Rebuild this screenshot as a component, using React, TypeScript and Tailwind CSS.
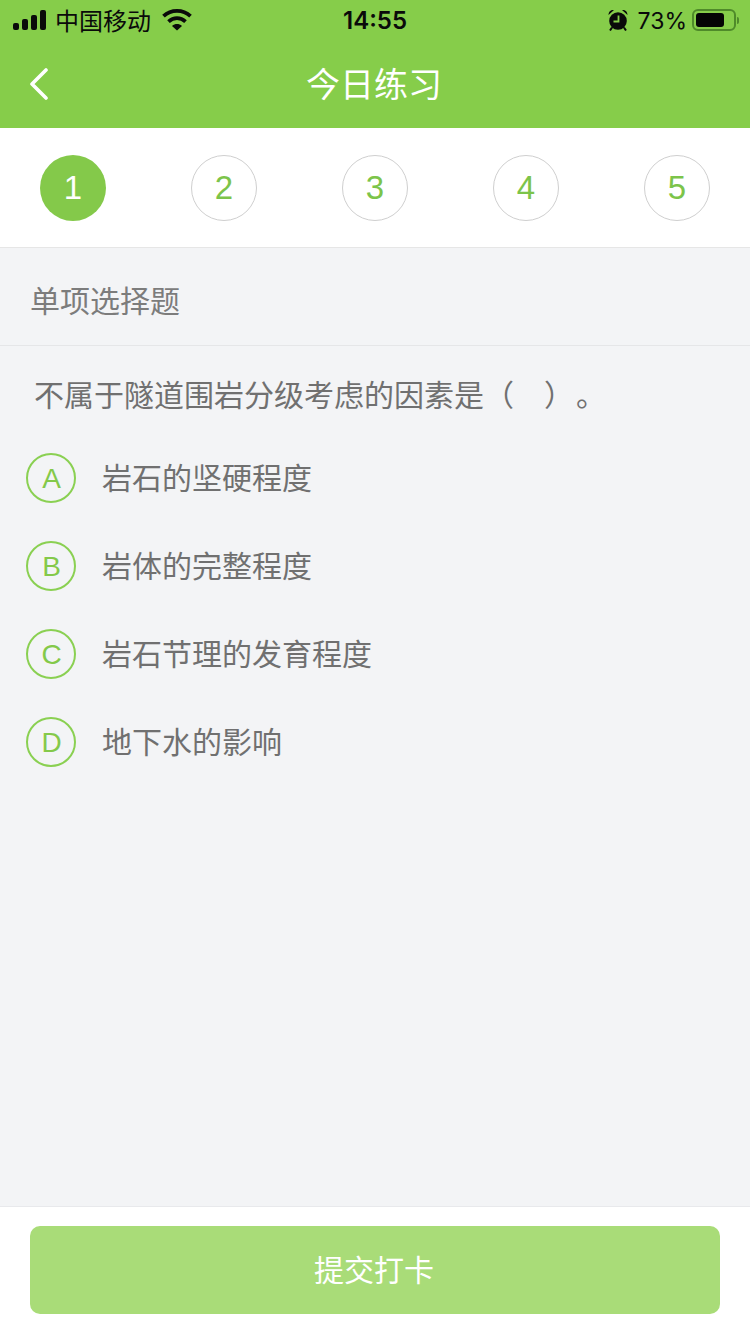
import React from "react";

const FONT = '"Noto Sans CJK SC", "Noto Sans", sans-serif';
const LATIN = '"Inter", "Noto Sans CJK SC", sans-serif';
const ARIAL = '"Liberation Sans", "Noto Sans CJK SC", sans-serif';

function Signal() {
  return (
    <svg width="34" height="20" viewBox="0 0 34 20" className="block">
      <rect x="0" y="13" width="6" height="7" rx="2" fill="#0a0a0a" />
      <rect x="9" y="9" width="6" height="11" rx="2" fill="#0a0a0a" />
      <rect x="18" y="5" width="6" height="15" rx="2" fill="#0a0a0a" />
      <rect x="27" y="0" width="6" height="20" rx="2" fill="#0a0a0a" />
    </svg>
  );
}

function Wifi() {
  return (
    <svg width="30" height="22" viewBox="0 0 30 22" className="block" fill="none" stroke="#0a0a0a" strokeWidth="3.8">
      <path d="M1.5 7.2 C9 0.2 21 0.2 28.5 7.2" />
      <path d="M6.5 12.6 C11.5 8 18.5 8 23.5 12.6" />
      <path d="M10 17 L15 21.5 L20 17 C17 14.4 13 14.4 10 17 Z" fill="#0a0a0a" stroke="none" />
    </svg>
  );
}

function Alarm() {
  return (
    <svg width="20" height="22" viewBox="0 0 20 22" className="block">
      <circle cx="10" cy="12" r="8.8" fill="#0a0a0a" />
      <path d="M10.5 6.5 V12.5 H5.5" stroke="#86cd4a" strokeWidth="1.8" fill="none" />
      <path d="M0.5 6 C0.5 2.5 3 0.6 6 1 Z M19.5 6 C19.5 2.5 17 0.6 14 1 Z" fill="#0a0a0a" />
      <path d="M4 18.5 L2 21.5 M16 18.5 L18 21.5" stroke="#0a0a0a" strokeWidth="2" />
    </svg>
  );
}

function Battery() {
  return (
    <div className="flex items-center gap-[1px]">
      <div className="w-[44px] h-[22px] rounded-[6px] border-2 border-[#4f8a2a] p-[2px]">
        <div className="h-full w-[28px] rounded-[3px] bg-[#050505]" />
      </div>
      <div className="w-[2px] h-[7px] rounded-r-full bg-[#4f8a2a]" />
    </div>
  );
}

function Step({ n, active }: { n: number; active?: boolean }) {
  return (
    <div
      className={
        active
          ? "w-[66px] h-[66px] rounded-full bg-[#84c94a] text-white flex items-center justify-center text-[33px]"
          : "w-[66px] h-[66px] rounded-full border border-[#cfcfcf] text-[#7cc44a] flex items-center justify-center text-[33px]"
      }
      style={{ fontFamily: ARIAL }}
    >
      {n}
    </div>
  );
}

function Option({ letter, text }: { letter: string; text: string }) {
  return (
    <div className="h-[88px] flex items-center pl-[26px]">
      <div
        className="w-[50px] h-[50px] rounded-full border-2 border-[#8ad052] text-[#84c94a] flex items-center justify-center pl-[1px] pt-[2px] text-[28px] shrink-0"
        style={{ fontFamily: ARIAL }}
      >
        {letter}
      </div>
      <div className="ml-[26px] pb-[4px] text-[30px] leading-[40px] text-[#707070]">{text}</div>
    </div>
  );
}

export default function App() {
  return (
    <div className="w-[750px] h-[1334px] flex flex-col bg-[#f3f4f6] overflow-hidden" style={{ fontFamily: FONT }}>
      <header className="h-[128px] bg-[#86cd4a] shrink-0 flex flex-col">
        <div className="h-[40px] flex items-center justify-between pl-[13px] pr-[11px] relative">
          <div className="flex items-center">
            <Signal />
            <span className="ml-[8px] text-[24px] leading-none text-[#0a0a0a]">中国移动</span>
            <span className="ml-[11px]"><Wifi /></span>
          </div>
          <div className="absolute left-0 right-0 top-[5px] text-center text-[24px] leading-[32px] font-semibold text-[#0a0a0a]" style={{ fontFamily: LATIN }}>14:55</div>
          <div className="flex items-center">
            <Alarm />
            <span className="ml-[10px] pt-[2px] text-[23px] leading-none text-[#0a0a0a]" style={{ fontFamily: LATIN }}>73%</span>
            <span className="ml-[5px]"><Battery /></span>
          </div>
        </div>
        <div className="flex-1 relative flex items-center justify-center pb-[2px] pr-[2px]">
          <svg width="20" height="32" viewBox="0 0 20 32" className="absolute left-[29px] top-[28px]" fill="none" stroke="#ffffff" strokeWidth="3.6" strokeLinecap="round" strokeLinejoin="round">
            <path d="M17 2 L3 16 L17 30" />
          </svg>
          <span className="text-[34px] leading-none text-white">今日练习</span>
        </div>
      </header>

      <div className="h-[120px] shrink-0 bg-white border-b border-[#e6e6e6] flex items-center justify-between px-[40px]">
        <Step n={1} active />
        <Step n={2} />
        <Step n={3} />
        <Step n={4} />
        <Step n={5} />
      </div>

      <main className="flex-1 flex flex-col min-h-0">
        <div className="h-[98px] shrink-0 border-b border-[#e5e6e8] flex items-center pl-[30px] pt-[6px] text-[30px] text-[#7c7c7c]">
          单项选择题
        </div>
        <div className="pl-[34px] pt-[26px] h-[88px] shrink-0 text-[30px] leading-[42px] text-[#707070] [text-spacing-trim:space-all]">
          不属于隧道围岩分级考虑的因素是（<span className="inline-block w-[30px]" />）<span className="inline-block w-[2px]" />。
        </div>
        <div className="flex flex-col">
          <Option letter="A" text="岩石的坚硬程度" />
          <Option letter="B" text="岩体的完整程度" />
          <Option letter="C" text="岩石节理的发育程度" />
          <Option letter="D" text="地下水的影响" />
        </div>
      </main>

      <footer className="h-[128px] shrink-0 bg-white border-t border-[#e8e9ec] px-[30px] pt-[19px]">
        <div className="h-[88px] rounded-[10px] bg-[#a9dc78] flex items-center justify-center pr-[2px] pb-[4px] text-[30px] text-white">
          提交打卡
        </div>
      </footer>
    </div>
  );
}
